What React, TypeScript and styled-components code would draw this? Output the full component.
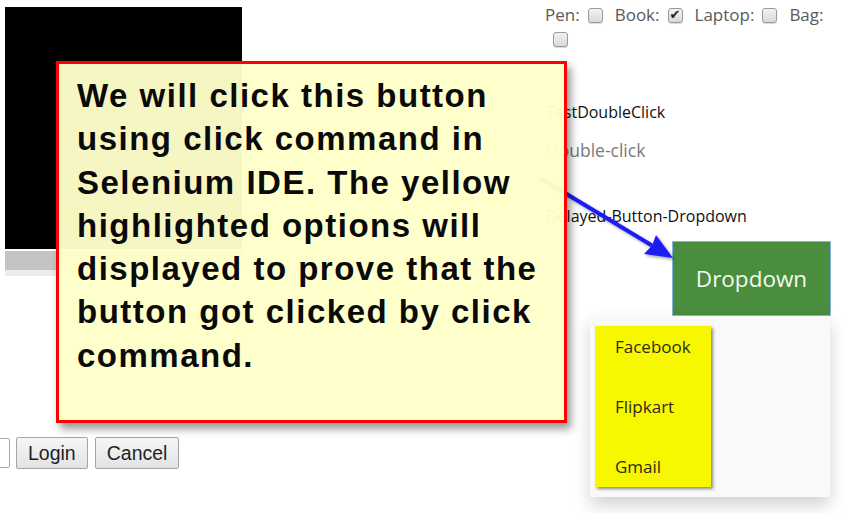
import React from "react";
import styled, { createGlobalStyle } from "styled-components";

const Global = createGlobalStyle`
  html, body { margin: 0; padding: 0; background: #ffffff; }
  body { font-family: "Open Sans", "DejaVu Sans", sans-serif; }
`;

const Page = styled.div`
  position: relative;
  width: 863px;
  height: 513px;
  overflow: hidden;
  display: flex;
  background: #fff;
`;

const LeftColumn = styled.div`
  width: 545px;
  flex: none;
  box-sizing: border-box;
  padding: 7px 0 0 5px;
  display: flex;
  flex-direction: column;
`;

const VideoFrame = styled.div`
  width: 237px;
  height: 242px;
  background: #000;
`;

const ScrollTrack = styled.div`
  width: 237px;
  height: 19px;
  margin-top: 2px;
  background: #c4c4c4;
  border-bottom: 6px solid #ececec;
`;

const LoginRow = styled.div`
  display: flex;
  align-items: center;
  margin-top: 161px;
  gap: 7px;
`;

const TextInput = styled.div`
  width: 160px;
  height: 30px;
  margin-left: -155px;
  margin-right: -1px;
  box-sizing: border-box;
  border: 1px solid #a9a9a9;
  border-radius: 2px;
  background: #fff;
`;

const FormButton = styled.button`
  height: 32px;
  padding: 0 11px;
  box-sizing: border-box;
  border: 1px solid #a6a6a6;
  border-radius: 2px;
  background: linear-gradient(#f6f6f6, #e3e3e3);
  font-family: "Liberation Sans", Arial, sans-serif;
  font-size: 19.5px;
  color: #1e1e2a;
  line-height: 30px;
`;

const RightColumn = styled.div`
  flex: 1;
  padding-top: 4px;
  display: flex;
  flex-direction: column;
  align-items: flex-start;
`;

const ItemsRow = styled.div`
  width: 286px;
  display: flex;
  flex-wrap: wrap;
  align-items: center;
  row-gap: 6px;
  font-size: 17px;
  line-height: 22px;
  color: #5a5a5a;
`;

const ItemLabel = styled.span`
  white-space: nowrap;
`;

const Check = styled.span<{ $checked?: boolean }>`
  position: relative;
  width: 15px;
  height: 15px;
  margin: 0 12px 0 8px;
  box-sizing: border-box;
  border: 1px solid #9a9a9a;
  border-radius: 3px;
  background: linear-gradient(#f2f2f2, #d9d9d9);
  box-shadow: 0 1px 1px rgba(0, 0, 0, 0.15);
  &::after {
    content: ${(p) => (p.$checked ? '"✔"' : '""')};
    position: absolute;
    left: 1px;
    top: -5px;
    font-family: "DejaVu Sans", sans-serif;
    font-size: 13px;
    color: #222;
  }
`;

const SectionTitle = styled.div<{ $top: number }>`
  margin-top: ${(p) => p.$top}px;
  font-size: 16px;
  line-height: 20px;
  color: #111;
  padding-left: 1px;
`;

const DoubleClickText = styled.div`
  margin-top: 17px;
  font-size: 17.5px;
  line-height: 22px;
  color: #7a7a7a;
  padding-left: 1px;
`;

const DropdownWrap = styled.div`
  position: relative;
  margin: 15px 0 0 127px;
`;

const DropdownButton = styled.div`
  width: 159px;
  height: 75px;
  box-sizing: border-box;
  border: 1px solid #86b3e3;
  background: #4a8d3e;
  color: #f4fbef;
  font-size: 22.5px;
  display: flex;
  align-items: center;
  justify-content: center;
  padding-bottom: 1px;
`;

const DropdownMenu = styled.div`
  position: absolute;
  top: 100%;
  right: 1px;
  width: 240px;
  height: 181px;
  box-sizing: border-box;
  padding: 10px 0 0 5px;
  background: #f9f9f9;
  box-shadow: 0 8px 16px rgba(0, 0, 0, 0.18);
`;

const MenuHighlight = styled.div`
  width: 116px;
  height: 161px;
  box-sizing: border-box;
  padding-top: 1px;
  display: flex;
  flex-direction: column;
  gap: 20px;
  background: #f7f700;
  box-shadow: 2px 2px 3px rgba(0, 0, 0, 0.45);
`;

const MenuItem = styled.div`
  height: 40px;
  line-height: 40px;
  padding-left: 20px;
  font-size: 17px;
  color: #2d2d10;
`;

const ArrowLayer = styled.svg`
  position: absolute;
  left: 0;
  top: 0;
  width: 863px;
  height: 513px;
  pointer-events: none;
`;

const Callout = styled.div`
  position: absolute;
  left: 56px;
  top: 61px;
  width: 511px;
  height: 362px;
  box-sizing: border-box;
  border: 3px solid #ff0000;
  background: rgba(255, 255, 202, 0.965);
  box-shadow: 4px 6px 8px rgba(0, 0, 0, 0.4);
  padding: 10px 0 0 18px;
`;

const CalloutText = styled.p`
  margin: 0;
  font-family: "Liberation Sans", Arial, sans-serif;
  font-weight: bold;
  font-size: 33px;
  line-height: 43.3px;
  letter-spacing: 1.5px;
  color: #0a0a0a;
`;

export default function App() {
  return (
    <>
      <Global />
      <Page>
        <LeftColumn>
          <VideoFrame />
          <ScrollTrack />
          <LoginRow>
            <TextInput />
            <FormButton>Login</FormButton>
            <FormButton>Cancel</FormButton>
          </LoginRow>
        </LeftColumn>
        <RightColumn>
          <ItemsRow>
            <ItemLabel>Pen:</ItemLabel>
            <Check />
            <ItemLabel>Book:</ItemLabel>
            <Check $checked />
            <ItemLabel>Laptop:</ItemLabel>
            <Check />
            <ItemLabel>Bag:</ItemLabel>
            <Check />
          </ItemsRow>
          <SectionTitle $top={55}>TestDoubleClick</SectionTitle>
          <DoubleClickText>Double-click</DoubleClickText>
          <SectionTitle $top={45}>Delayed-Button-Dropdown</SectionTitle>
          <DropdownWrap>
            <DropdownButton>Dropdown</DropdownButton>
            <DropdownMenu>
              <MenuHighlight>
                <MenuItem>Facebook</MenuItem>
                <MenuItem>Flipkart</MenuItem>
                <MenuItem>Gmail</MenuItem>
              </MenuHighlight>
            </DropdownMenu>
          </DropdownWrap>
        </RightColumn>
        <ArrowLayer viewBox="0 0 863 513">
          <defs>
            <filter id="arrowShadow" x="-20%" y="-20%" width="140%" height="140%">
              <feDropShadow dx="2" dy="2" stdDeviation="1.5" floodColor="#000" floodOpacity="0.35" />
            </filter>
          </defs>
          <g filter="url(#arrowShadow)" fill="#1f1ff5" stroke="none">
            <line x1="540" y1="178" x2="652" y2="245.5" stroke="#1f1ff5" strokeWidth="4" />
            <polygon points="673,258 644,254 652,245.5 656,235" />
          </g>
        </ArrowLayer>
        <Callout>
          <CalloutText>
            We will click this button using click command in Selenium IDE. The yellow highlighted options will displayed to prove that the button got clicked by click command.
          </CalloutText>
        </Callout>
      </Page>
    </>
  );
}
